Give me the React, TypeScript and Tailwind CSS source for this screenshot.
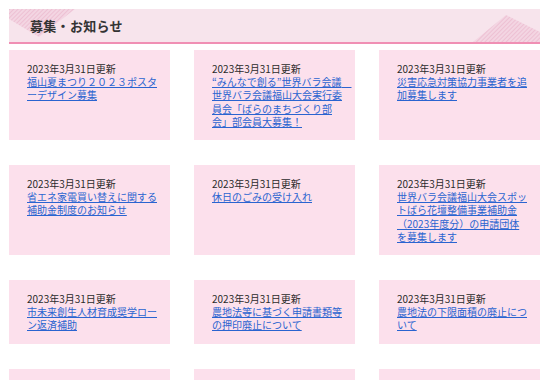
const notices = [
  { title: '福山夏まつり２０２３ポスターデザイン募集' },
  { title: '“みんなで創る”世界バラ会議　世界バラ会議福山大会実行委員会「ばらのまちづくり部会」部会員大募集！' },
  { title: '災害応急対策協力事業者を追加募集します' },
  { title: '省エネ家電買い替えに関する補助金制度のお知らせ' },
  { title: '休日のごみの受け入れ' },
  { title: '世界バラ会議福山大会スポットばら花壇整備事業補助金（2023年度分）の申請団体を募集します' },
  { title: '市未来創生人材育成奨学ローン返済補助' },
  { title: '農地法等に基づく申請書類等の押印廃止について' },
  { title: '農地法の下限面積の廃止について' },
  { title: '福山市職員採用試験のお知らせ' },
  { title: '市民活動支援補助金の募集' },
  { title: 'パブリックコメントの募集' },
];

function Hatch({ id }: { id: string }) {
  return (
    <defs>
      <pattern id={id} width="3" height="3" patternUnits="userSpaceOnUse" patternTransform="rotate(45)">
        <rect width="3" height="3" fill="#f3d5e2" />
        <line x1="0" y1="0" x2="0" y2="3" stroke="#e8afc7" strokeWidth="1.1" />
      </pattern>
    </defs>
  );
}

export default function App() {
  return (
    <div
      className="w-[554px] h-[380px] overflow-hidden bg-white pt-[9px] pl-[9px]"
      style={{ fontFamily: '"Noto Sans CJK JP", "Noto Sans", sans-serif' }}
    >
      {/* Heading */}
      <div className="relative w-[531px] h-[35px] bg-[#f7e4ec] border-b-2 border-[#f08fb4] flex items-center">
        <svg className="absolute left-0 top-0" width="68" height="30" viewBox="0 0 68 30">
          <Hatch id="hl" />
          <polygon points="0,0 66,0 30,28 0,10" fill="url(#hl)" />
        </svg>
        <svg className="absolute right-0 bottom-0" width="67" height="27" viewBox="0 0 67 27">
          <Hatch id="hr" />
          <polygon points="0,27 33,0 67,17 67,27" fill="url(#hr)" />
        </svg>
        <h2 className="relative pl-[21px] text-[13px] font-bold text-[#333] tracking-[0.3px]">
          募集・お知らせ
        </h2>
      </div>

      {/* Cards */}
      <div className="mt-[6px] grid grid-cols-[161px_161px_161px] gap-x-[24px] gap-y-[25px]">
        {notices.map((n, i) => (
          <div key={i} className="bg-[#fce0ec] pt-[12px] pb-[12px] pl-[18px] pr-[12px] text-[10px] leading-[13.2px]">
            <p className="text-[#2b2b2b]">2023年3月31日更新</p>
            <a href="#" className="text-[#2a64d0] underline">
              {n.title}
            </a>
          </div>
        ))}
      </div>
    </div>
  );
}
